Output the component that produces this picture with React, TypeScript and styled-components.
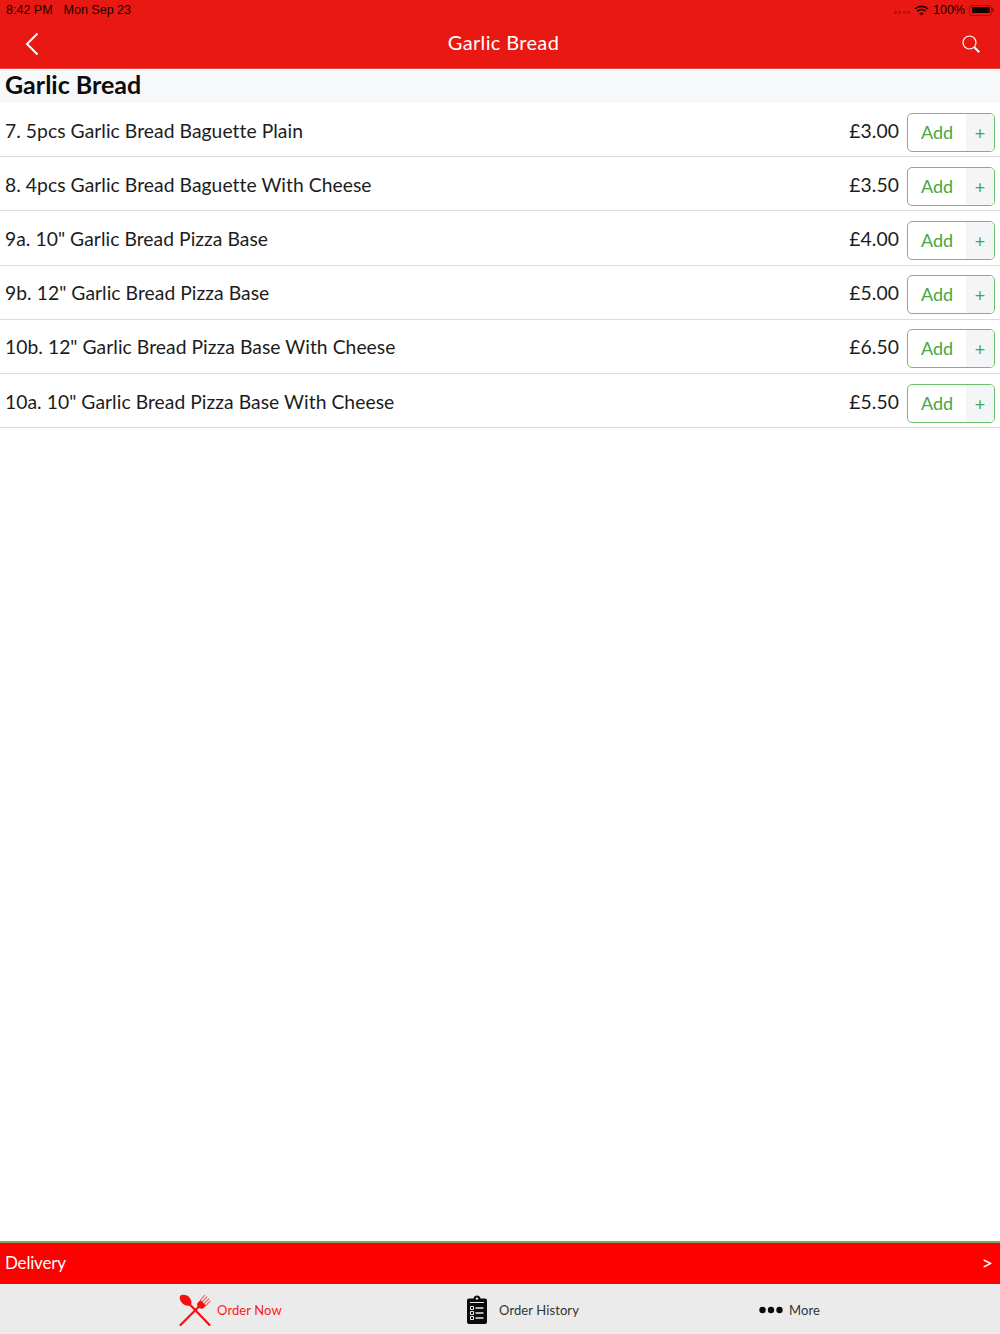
import styled, { createGlobalStyle } from 'styled-components';

const items = [
  { name: '7. 5pcs Garlic Bread Baguette Plain', price: '£3.00' },
  { name: '8. 4pcs Garlic Bread Baguette With Cheese', price: '£3.50' },
  { name: '9a. 10" Garlic Bread Pizza Base', price: '£4.00' },
  { name: '9b. 12" Garlic Bread Pizza Base', price: '£5.00' },
  { name: '10b. 12" Garlic Bread Pizza Base With Cheese', price: '£6.50' },
  { name: '10a. 10" Garlic Bread Pizza Base With Cheese', price: '£5.50' },
];

const GlobalStyle = createGlobalStyle`
  html, body {
    margin: 0;
    padding: 0;
    background: #fff;
    font-family: Lato, "Liberation Sans", sans-serif;
  }
  * {
    box-sizing: border-box;
  }
`;

const Page = styled.div`
  height: 1334px;
  display: flex;
  flex-direction: column;
  overflow: hidden;
`;

const Header = styled.header`
  height: 69px;
  background: #e91812;
  border-bottom: 1px solid #ee4a45;
`;

const StatusBar = styled.div`
  height: 20px;
  padding: 0 8px 0 6px;
  display: flex;
  align-items: center;
  justify-content: space-between;
  font-size: 12.5px;
  font-family: "Liberation Sans", sans-serif;
  color: #0d0201;
`;

const StatusGroup = styled.div<{ gap: number }>`
  display: flex;
  align-items: center;
  gap: ${({ gap }) => gap}px;
`;

const Signal = styled.span`
  display: flex;
  gap: 1.5px;
  margin-top: 4px;
`;

const SignalDot = styled.i`
  width: 3px;
  height: 3px;
  border-radius: 50%;
  background: #a8140f;
`;

const Battery = styled.span`
  width: 23px;
  height: 11px;
  padding: 1.5px;
  border: 1px solid #9c120e;
  border-radius: 3px;
  position: relative;
  display: block;

  &::before {
    content: '';
    display: block;
    height: 100%;
    background: #120302;
    border-radius: 1px;
  }
  &::after {
    content: '';
    position: absolute;
    right: -3px;
    top: 2.5px;
    width: 2px;
    height: 4px;
    background: #9c120e;
    border-radius: 0 1px 1px 0;
  }
`;

const NavBar = styled.div`
  height: 47px;
  padding: 0 19px 0 24px;
  display: flex;
  align-items: center;
  justify-content: space-between;
  color: #fff;
`;

const NavTitle = styled.div`
  font-size: 20px;
  letter-spacing: 0.35px;
  margin: 0 0 3px 6px;
`;

const SectionTitle = styled.h1`
  margin: 0;
  height: 34px;
  padding: 0 5px;
  background: #f7f8fa;
  color: #0c0c0c;
  font-size: 25px;
  font-weight: 700;
  line-height: 30px;
`;

const Row = styled.div`
  height: 54.2px;
  padding: 1px 5px 0;
  display: flex;
  align-items: center;
  border-bottom: 1px solid #dcdcdc;
  background: #fff;
`;

const ItemName = styled.div`
  flex: 1;
  font-size: 19.3px;
  color: #1c1c1c;
  letter-spacing: 0.05px;
`;

const Price = styled.div`
  font-size: 19.3px;
  color: #1c1c1c;
  margin-right: 8px;
  letter-spacing: 0.1px;
`;

const AddButton = styled.button`
  width: 88px;
  height: 39px;
  margin-top: 4px;
  padding: 0;
  display: flex;
  border: 1.5px solid #6cbf6c;
  border-radius: 5px;
  background: #fff;
  color: #45a845;
  font-family: inherit;
  overflow: hidden;
`;

const AddLabel = styled.span`
  width: 58px;
  font-size: 18px;
  line-height: 36px;
  text-align: center;
`;

const AddPlus = styled.span`
  flex: 1;
  background: #f4f5f7;
  font-size: 18px;
  line-height: 38px;
  text-align: center;
`;

const Spacer = styled.div`
  flex: 1;
`;

const DeliveryBar = styled.div`
  height: 43px;
  padding: 0 7px 3px 5px;
  display: flex;
  align-items: center;
  justify-content: space-between;
  background: #fd0000;
  border-top: 2px solid #7bab55;
  color: #fff;
  font-size: 17px;
  letter-spacing: -0.2px;
`;

const DeliveryArrow = styled.span`
  font-size: 20px;
`;

const TabBar = styled.nav`
  height: 50px;
  padding-top: 1px;
  background: #ebebeb;
  display: grid;
  grid-template-columns: 460px 262px 1fr;
`;

const Tab = styled.div<{ active?: boolean; gap: number; indent: number }>`
  display: flex;
  align-items: center;
  gap: ${({ gap }) => gap}px;
  padding-left: ${({ indent }) => indent}px;
  font-size: 13px;
  letter-spacing: 0.1px;
  color: ${({ active }) => (active ? '#f91a1a' : '#333')};
`;

const BackIcon = () => (
  <svg width="16" height="24" viewBox="0 0 16 24" fill="none" stroke="#fff" strokeWidth="2">
    <path d="M13.500 1.500 3 12l10.500 10.500" />
  </svg>
);

const SearchIcon = () => (
  <svg width="20" height="20" viewBox="0 0 20 20" fill="none" stroke="#fff">
    <circle cx="8.500" cy="8.500" r="6.500" strokeWidth="1.200" />
    <path d="m13.300 13.300 5 5" strokeWidth="2" />
  </svg>
);

const WifiIcon = () => (
  <svg width="15" height="11" viewBox="0 0 16 12" fill="none" stroke="#1a0503" strokeWidth="1.700">
    <path d="M1 4.200c4-3.600 10-3.600 14 0M3.400 6.800c2.700-2.300 6.500-2.300 9.200 0" />
    <path d="M5.500 8.900 8 11.400l2.500-2.500c-1.400-1.100-3.600-1.100-5 0Z" fill="#1a0503" stroke="none" />
  </svg>
);

const CutleryIcon = () => (
  <svg width="32" height="32" viewBox="0 0 32 32" fill="none">
    <path d="M30.500 31 9 8.500" stroke="#f80c0c" strokeWidth="2.200" strokeLinecap="round" />
    <path d="M1.500 31 21 11.500" stroke="#f80c0c" strokeWidth="2.200" strokeLinecap="round" />
    <path d="M1.500 1.500c3-1.600 8-.2 10 3.500 1.400 2.700 1.200 5.400-.6 6.400-2.600 1.200-6.600-.6-8.800-3.700C.6 5.500.2 2.700 1.500 1.500Z" fill="#f80c0c" />
    <path d="M19 13c-1.500-2-1-3.500 0-4.500l2.500-2.500 5.500 5.500-2.500 2.500c-1 1-3.500 1-5.500-1Z" fill="#f80c0c" />
    <path d="m21.500 6 4.500-5M23.300 7.800l4.800-5.200M25.100 9.600l5-5M26.900 11.400l4.500-4.500" stroke="#f80c0c" strokeWidth="1.100" opacity="0.65" />
  </svg>
);

const ClipboardIcon = () => (
  <svg width="20" height="29" viewBox="0 0 20 29">
    <path d="M2 3.500h4.500C6.800 1.600 8.200.5 10 .5s3.200 1.100 3.500 3H18a2 2 0 0 1 2 2V27a2 2 0 0 1-2 2H2a2 2 0 0 1-2-2V5.500a2 2 0 0 1 2-2Z" fill="#0b0b0b" />
    <circle cx="10" cy="3.600" r="1.200" fill="#ebebeb" />
    <path d="M3 7.500h14" stroke="#ebebeb" strokeWidth="1" />
    <path d="M3.500 11.500h3v3h-3zM3.500 16.500h3v3h-3zM3.500 21.500h3v3h-3z" fill="none" stroke="#ebebeb" strokeWidth="1" />
    <path d="M8.500 13h8M8.500 18h8M8.500 23h8" stroke="#ebebeb" strokeWidth="1.400" />
  </svg>
);

const DotsIcon = () => (
  <svg width="24" height="8" viewBox="0 0 24 8" fill="#0b0b0b">
    <circle cx="3.500" cy="4" r="3.200" />
    <circle cx="12" cy="4" r="3.200" />
    <circle cx="20.500" cy="4" r="3.200" />
  </svg>
);

export default function App() {
  return (
    <Page>
      <GlobalStyle />
      <Header>
        <StatusBar>
          <StatusGroup gap={11}>
            <span>8:42 PM</span>
            <span>Mon Sep 23</span>
          </StatusGroup>
          <StatusGroup gap={4}>
            <Signal>
              <SignalDot />
              <SignalDot />
              <SignalDot />
              <SignalDot />
            </Signal>
            <WifiIcon />
            <span>100%</span>
            <Battery />
          </StatusGroup>
        </StatusBar>
        <NavBar>
          <BackIcon />
          <NavTitle>Garlic Bread</NavTitle>
          <SearchIcon />
        </NavBar>
      </Header>
      <SectionTitle>Garlic Bread</SectionTitle>
      {items.map((item) => (
        <Row key={item.name}>
          <ItemName>{item.name}</ItemName>
          <Price>{item.price}</Price>
          <AddButton>
            <AddLabel>Add</AddLabel>
            <AddPlus>+</AddPlus>
          </AddButton>
        </Row>
      ))}
      <Spacer />
      <DeliveryBar>
        <span>Delivery</span>
        <DeliveryArrow>&gt;</DeliveryArrow>
      </DeliveryBar>
      <TabBar>
        <Tab active gap={6} indent={179}>
          <CutleryIcon />
          Order Now
        </Tab>
        <Tab gap={12} indent={7}>
          <ClipboardIcon />
          Order History
        </Tab>
        <Tab gap={6} indent={37}>
          <DotsIcon />
          More
        </Tab>
      </TabBar>
    </Page>
  );
}
